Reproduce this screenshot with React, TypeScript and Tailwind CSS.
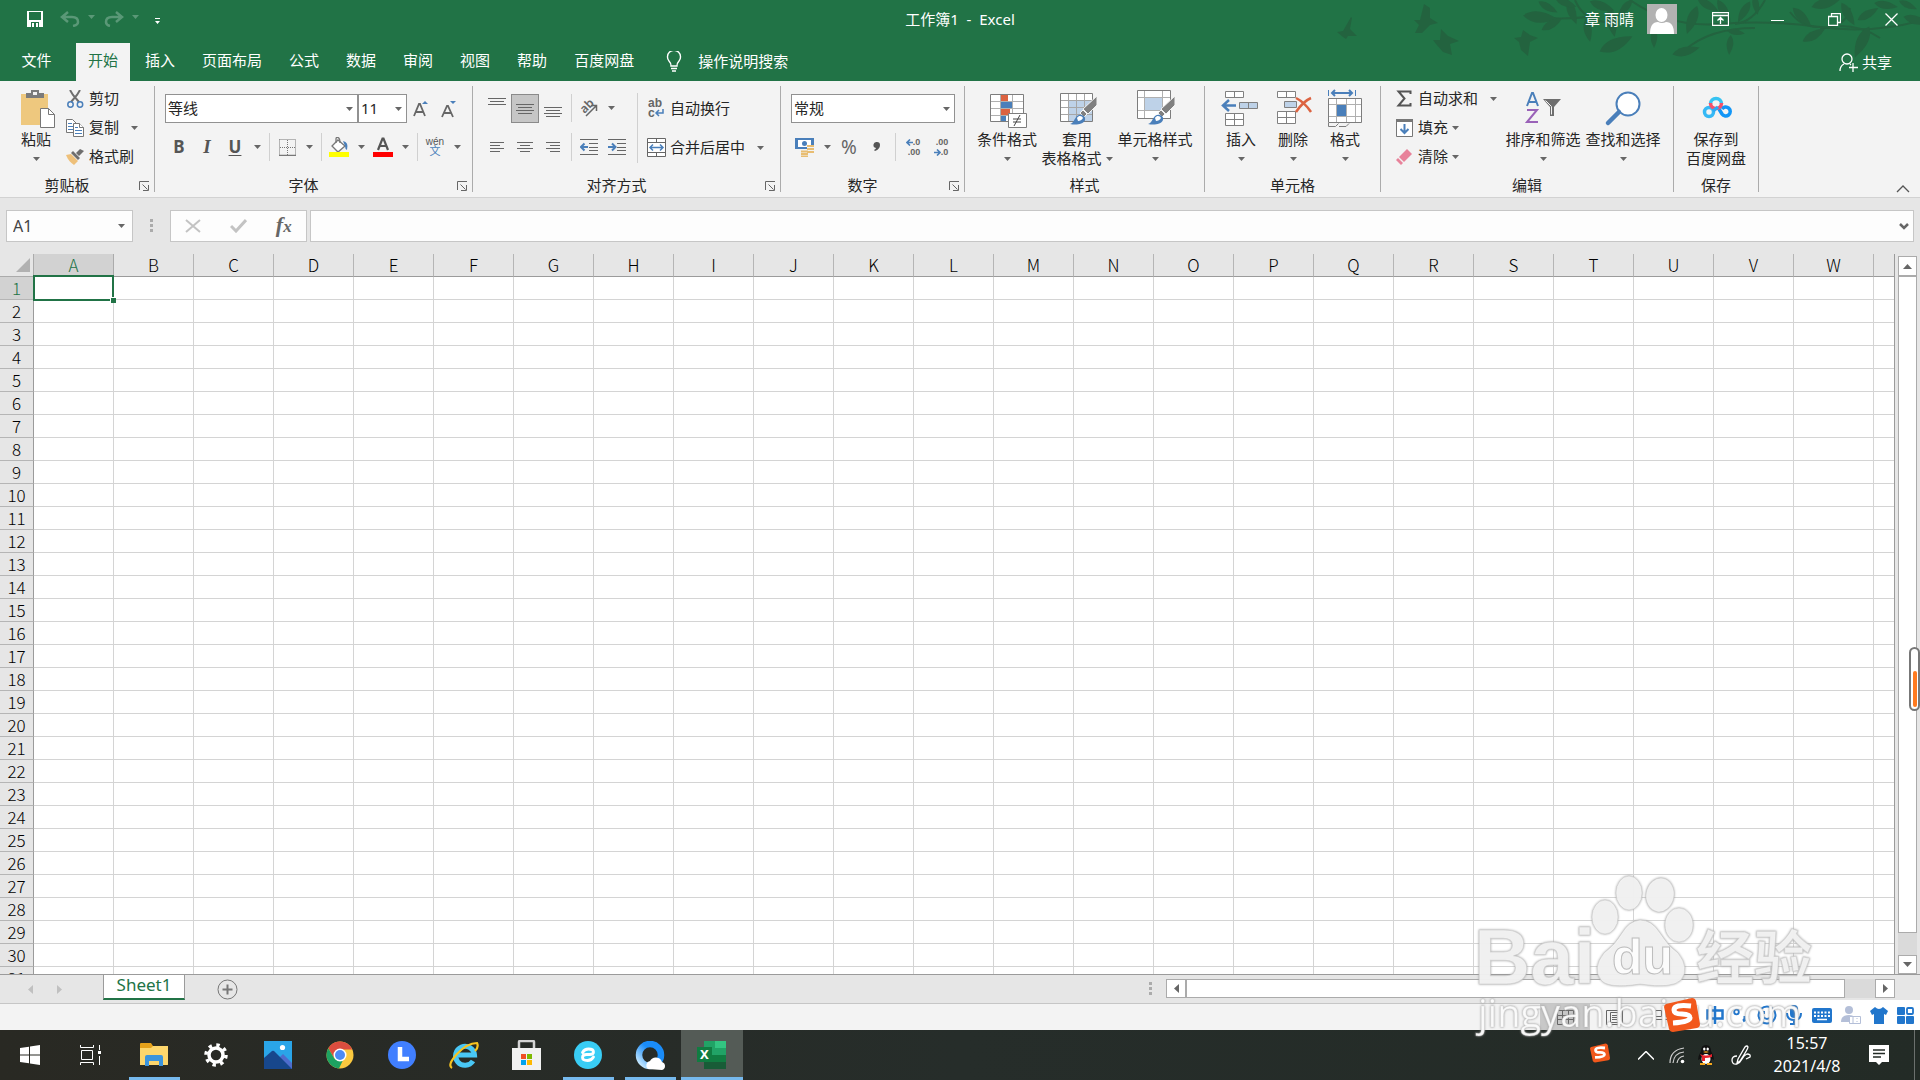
import type { ReactNode } from "react";

const tabs = ["插入", "页面布局", "公式", "数据", "审阅", "视图", "帮助", "百度网盘"];
const columns = "ABCDEFGHIJKLMNOPQRSTUVW".split("");
const rows = Array.from({ length: 31 }, (_, i) => i + 1);

const Arrow = ({ className = "text-[#666666]" }: { className?: string }) => (
  <svg width="7" height="4" viewBox="0 0 7 4" className={className}>
    <path d="M0 0h7L3.5 4z" fill="currentColor" />
  </svg>
);

const ArrowButton = ({ label }: { label: string }) => (
  <button aria-label={label} className="flex w-4 h-7 items-center justify-center">
    <Arrow />
  </button>
);

const Separator = () => (
  <span className="flex w-2 h-7 justify-center">
    <span className="w-px bg-[#d0d0d0]" />
  </span>
);

function Tool({
  label,
  active,
  children,
}: {
  label: string;
  active?: boolean;
  children: ReactNode;
}) {
  return (
    <button
      aria-label={label}
      className={
        active
          ? "flex w-7 h-[29px] items-center justify-center border border-[#8a8a8a] bg-[#c6c6c6]"
          : "flex w-7 h-7 items-center justify-center"
      }
    >
      {children}
    </button>
  );
}

function BigButton({
  icon,
  label,
  second,
  arrow = true,
  className,
}: {
  icon: ReactNode;
  label: string;
  second?: string;
  arrow?: boolean;
  className: string;
}) {
  return (
    <button className={`flex flex-col items-center pt-[7px] leading-[19px] whitespace-nowrap ${className}`}>
      <span className="h-[42px]">{icon}</span>
      <span>{label}</span>
      <span className="flex h-[19px] items-center gap-1">
        {second}
        {arrow && <Arrow />}
      </span>
    </button>
  );
}

function SmallButton({
  icon,
  label,
  arrow,
}: {
  icon: ReactNode;
  label: string;
  arrow?: "near" | "far";
}) {
  return (
    <button className="flex h-[29px] items-center gap-1 whitespace-nowrap">
      <span className="flex w-5 justify-center">{icon}</span>
      <span>{label}</span>
      {arrow && (
        <span className={arrow === "far" ? "pl-2" : ""}>
          <Arrow />
        </span>
      )}
    </button>
  );
}

function Group({
  title,
  launcher,
  className,
  children,
}: {
  title: string;
  launcher?: boolean;
  className: string;
  children: ReactNode;
}) {
  return (
    <section className={`flex shrink-0 ${className}`}>
      <div className="flex min-w-0 grow flex-col">
        <div className="flex h-[93px]">{children}</div>
        <div className="flex h-[23px] items-center">
          <span className="grow text-center">{title}</span>
          {launcher && (
            <button aria-label={`${title}设置`} className="flex w-5 justify-center">
              <svg width="11" height="10" viewBox="0 0 11 10" fill="none" stroke="#666666">
                <path d="M.5 9V.5H10M3.5 3.5l5 5M9.5 4v5.5H4" />
              </svg>
            </button>
          )}
        </div>
      </div>
      <span className="my-[5px] w-px bg-[#ababab]" />
    </section>
  );
}

function Combo({ label, value, className }: { label: string; value: string; className: string }) {
  return (
    <div className={`relative h-[29px] ${className}`}>
      <select
        aria-label={label}
        className="h-full w-full appearance-none border border-[#919191] bg-white pl-[2px] text-[#262626]"
      >
        <option>{value}</option>
      </select>
      <span className="pointer-events-none absolute inset-y-0 right-[5px] flex items-center">
        <Arrow />
      </span>
    </div>
  );
}

/* horizontal strokes used by all the alignment icons */
function Lines({ spans, y, gap = 4 }: { spans: [number, number][]; y: number; gap?: number }) {
  return (
    <svg width="20" height="28" viewBox="0 0 20 28" fill="none" stroke="#666666">
      {spans.map(([from, to], i) => (
        <path key={i} d={`M${from} ${y + i * gap + 0.5}H${to}`} />
      ))}
    </svg>
  );
}

function Indent({ flip }: { flip?: boolean }) {
  return (
    <svg width="18" height="16" viewBox="0 0 18 16" fill="none" stroke="#666666">
      <path d="M0 .5h18M9 4.5h9M9 8.5h9M9 11.5h9M0 15.5h18" />
      <path d={flip ? "M0 8h7M4 4.500l3.500 3.500L4 11.500" : "M8 8H1M4.500 4.500L1 8l3.500 3.500"} stroke="#4a7fba" strokeWidth="2" />
    </svg>
  );
}

const Brush = () => (
  <g>
    <path d="M41 8v9l-9 9-5-5z" fill="#808080" stroke="#f3f3f3" />
    <path d="M27 22l4 4-3 3-4-4z" fill="#808080" stroke="#f3f3f3" />
    <path d="M14 36c4-1 4-5 7-8 4-3 9 0 8 4-2 5-10 5-15 4z" fill="#4a7fba" />
    <path d="M21 30c2-3 5-2 6 0-1 2-3 3-5 3z" fill="#fff" />
  </g>
);

const PasteIcon = () => (
  <svg width="42" height="42" viewBox="0 0 42 42">
    <path d="M6 6h27v31H6z" fill="#eec87e" />
    <path d="M11 10V5h5V2h8v3h5v5z" fill="#7b7b7b" />
    <path d="M18 4h4v3h-4z" fill="#f3f3f3" />
    <path d="M25.500 20.500h8l6 6v13h-14z" fill="#fff" stroke="#777" />
    <path d="M33.500 20.500v6h6" fill="none" stroke="#777" />
  </svg>
);

const CutIcon = () => (
  <svg width="17" height="18" viewBox="0 0 17 18" fill="none">
    <path d="M3 0l3 5 6 7M13 0l-3 5-6 7" stroke="#6e6e6e" strokeWidth="2" />
    <circle cx="3.500" cy="14.500" r="2.700" stroke="#4a7fba" strokeWidth="1.500" />
    <circle cx="13" cy="14.500" r="2.700" stroke="#4a7fba" strokeWidth="1.500" />
  </svg>
);

const CopyIcon = () => (
  <svg width="18" height="18" viewBox="0 0 18 18" fill="#fff" stroke="#777">
    <path d="M.5.5h6l4 4v9H.5z" />
    <path d="M2 4.500h4M2 7.500h5M2 10.500h5" stroke="#4a7fba" />
    <path d="M7.500 4.500h6l4 4v9h-10z" />
    <path d="M13.500 4.500v4h4" />
    <path d="M9 8.500h3M9 11.500h7M9 14.500h7" stroke="#4a7fba" />
  </svg>
);

const PainterIcon = () => (
  <svg width="18" height="16" viewBox="0 0 18 16">
    <path d="M0 6l5-1 7 7-4 4c-3-2-6-5-8-10z" fill="#eec07a" />
    <path d="M5 4l2-2 7 7-2 2zM10 4l4-4 4 2-5 5z" fill="#6e6e6e" />
  </svg>
);

const CondIcon = () => (
  <svg width="42" height="42" viewBox="0 0 42 42">
    <path d="M4.500 6.500h33v27h-33z" fill="#fff" />
    <path d="M15 7h7v6h-7zM15 21h9v6h-9z" fill="#dc6341" />
    <path d="M15 14h11v6H15zM15 28h5v5h-5z" fill="#4a7fba" />
    <path d="M14.500 7v26M26.500 7v26M5 13.500h32M5 20.500h32M5 27.500h32" stroke="#b0b0b0" />
    <path d="M4.500 6.500h33v27h-33z" fill="none" stroke="#7d7d7d" />
    <path d="M22.500 25.500h18v14h-18z" fill="#fff" stroke="#7d7d7d" />
    <path d="M27 31h8M27 34h8M34 27l-6 11" stroke="#444" />
  </svg>
);

const TableIcon = () => (
  <svg width="42" height="42" viewBox="0 0 42 42">
    <path d="M4.500 5.500h32v28h-32z" fill="#fff" />
    <path d="M13 13h24v20H13z" fill="#bed2e8" />
    <path d="M12.500 5v28M20.500 5v28M28.500 5v28M5 12.500h31M5 19.500h31M5 26.500h31" stroke="#a6a6a6" />
    <path d="M4.500 5.500h32v28h-32z" fill="none" stroke="#7d7d7d" />
    <Brush />
  </svg>
);

const CellStyleIcon = () => (
  <svg width="42" height="42" viewBox="0 0 42 42">
    <path d="M3.500 2.500h33v28h-33z" fill="#fff" />
    <path d="M10.500 3v27M28.500 3v27M4 9.500h32M4 22.500h32" stroke="#b0b0b0" />
    <path d="M11 10h17v12H11z" fill="#bed2e8" />
    <path d="M3.500 2.500h33v28h-33z" fill="none" stroke="#7d7d7d" />
    <Brush />
  </svg>
);

const InsertIcon = () => (
  <svg width="42" height="42" viewBox="0 0 42 42" fill="#fff" stroke="#808080">
    <path d="M5.500 3.500h18v6h-18zM14.500 3.500v6M5.500 25.500h18v12h-18zM14.500 25.500v12M5.500 31.500h18" />
    <path d="M19.500 14.500h18v6h-18zM28.500 14.500v6" fill="#bed2e8" />
    <path d="M3 17.500h13M9 12l-6 5.500L9 23" fill="none" stroke="#4a7fba" strokeWidth="2.500" />
  </svg>
);

const DeleteIcon = () => (
  <svg width="42" height="42" viewBox="0 0 42 42" fill="#fff" stroke="#808080">
    <path d="M5.500 3.500h18v6h-18zM14.500 3.500v6M5.500 23.500h18v12h-18zM14.500 23.500v12M5.500 29.500h18" />
    <path d="M12.500 13.500h12v6h-12z" fill="#bed2e8" />
    <path d="M24 10c6 3 11 8 15 14M39 10c-7 3-11 8-15 14" fill="none" stroke="#dc6341" strokeWidth="2.500" />
  </svg>
);

const FormatIcon = () => (
  <svg width="42" height="42" viewBox="0 0 42 42" fill="none">
    <path d="M4.500 10.500h33v24h-33z" fill="#fff" />
    <path d="M12.500 11v23M22.500 11v23M31.500 11v23M5 16.500h32M5 28.500h32" stroke="#b0b0b0" />
    <path d="M4.500 10.500h33v24h-33zM4.500 35v3.500h7l3-3M15 38.500h7l3-3" stroke="#7d7d7d" />
    <path d="M13 17h9v11h-9z" fill="#4a7fba" />
    <path d="M4.500 2v6M31.500 2v6" stroke="#4a7fba" />
    <path d="M8 5h20M11 2L8 5l3 3M25 2l3 3-3 3" stroke="#4a7fba" strokeWidth="2" />
  </svg>
);

const SortIcon = () => (
  <svg width="42" height="42" viewBox="0 0 42 42" fill="none">
    <path d="M5 18l5-13h1l5 13M7 14h7" stroke="#4a7fba" strokeWidth="2" />
    <path d="M5 22h10L5 34h11" stroke="#9a62b8" strokeWidth="2" />
    <path d="M21 11h18l-7 8v9h-4v-9z" fill="#6e6e6e" />
    <path d="M23.500 12.500l6 6v8" stroke="#f3f3f3" />
  </svg>
);

const FindIcon = () => (
  <svg width="42" height="42" viewBox="0 0 42 42" fill="none" stroke="#4a7fba">
    <circle cx="26" cy="16" r="11.500" fill="#fff" strokeWidth="2" />
    <path d="M17 24L6 35" strokeWidth="4.500" strokeLinecap="round" />
  </svg>
);

const CloudIcon = () => (
  <svg width="42" height="42" viewBox="0 0 42 42" fill="none" strokeWidth="3.500">
    <path d="M15.500 16a5.500 5.500 0 0 1 11 0" stroke="#36c3f2" />
    <circle cx="14" cy="24" r="4.500" stroke="#36b9f5" />
    <path d="M24 21l3 5a4.500 4.500 0 1 0 0-5" stroke="#1296f7" />
    <path d="M15.500 15a5.500 5.500 0 0 0 11 0" stroke="#f4516c" />
    <path d="M18 23l5-4" stroke="#2ba9f5" />
  </svg>
);

const SumIcon = () => (
  <svg width="16" height="17" viewBox="0 0 16 17" fill="none">
    <path d="M14.500 4V1.500h-12l6 7-6 7h12V13" stroke="#555" strokeWidth="2" />
  </svg>
);

const FillIcon = () => (
  <svg width="17" height="18" viewBox="0 0 17 18" fill="none">
    <path d="M.5.5h16v17H.5z" fill="#fff" stroke="#777" />
    <path d="M0 0h17v3H0z" fill="#777" />
    <path d="M8.500 5v9M4.500 10l4 4 4-4" stroke="#4a7fba" strokeWidth="2" />
  </svg>
);

const EraserIcon = () => (
  <svg width="16" height="16" viewBox="0 0 16 16">
    <path d="M11 0l5 5-8 8-5-5z" fill="#e8829a" />
    <path d="M2 9l5 5-2 2-5-5z" fill="#e8829a" />
  </svg>
);

const leaves: [number, number, number, number][] = [
  [220, 17, 34, 5], [232, 24, 24, -30], [228, 7, 22, 30], [252, 12, 26, 70], [268, 30, 24, 80],
  [246, 3, 22, 20], [292, 22, 30, 80], [282, 6, 26, 20], [305, 8, 22, 130], [296, 44, 36, -25],
  [334, 38, 20, 90], [366, 51, 28, -14], [410, 45, 20, 95], [372, 20, 30, 110], [388, 5, 24, 30],
  [404, 11, 26, 60], [424, 12, 24, 120], [416, 32, 18, 10], [436, 5, 20, 80], [482, 17, 26, 45],
  [494, 35, 26, -30], [506, 3, 30, -15], [528, 14, 26, 60], [548, 14, 24, -30], [542, 42, 34, 115],
  [566, 5, 24, 10], [588, 5, 20, 25], [596, 20, 26, 15],
];

/* foliage and birds behind the title bar */
const HeaderArt = () => (
  <svg className="absolute top-0 right-0" width="600" height="66" viewBox="0 0 600 66" fill="#23633f">
    <path d="M17 32l6-1 8-14 1 1-2 11 7 7h-9l-2 3-3-2zM94 20h6l4-16 6 4v10l8 5-8 2-8 8h-7l4-8zM113 40h7l1-11 7 7 11 5-9 3 2 11-9-3-7-8zM194 38l7-1 2-7 7 5 8 3-8 4-2 14-7-6-2-8z" />
    <g fill="none" stroke="#23633f" strokeWidth="2">
      <path d="M215 17q25 3 52 0M255 0q10 24 40 22M310 0q40 28 90 24t100 3 100-6" />
      <path d="M365 50q25-22 70-22M470 12q12 16 30 15M530 8q-4 20-30 20M520 26q22 0 40 12M445 0q-12 22-30 24" />
    </g>
    {leaves.map(([x, y, size, angle], i) => (
      <path
        key={i}
        d="M-.5 0Q-.15-.32.5 0Q-.1.34-.5 0z"
        transform={`translate(${x} ${y}) rotate(${angle}) scale(${size})`}
      />
    ))}
  </svg>
);

function Header() {
  return (
    <header className="relative bg-[#217346] text-white">
      <HeaderArt />
      <div className="relative grid h-[38px] grid-cols-[1fr_auto_1fr] items-center">
        <div className="flex items-center pl-[27px]">
          <button aria-label="保存" className="w-[33px]">
            <svg width="16" height="16" viewBox="0 0 16 16">
              <path d="M0 0h16v16H0z" fill="#fff" />
              <path d="M2 1h12v8H2zM4 11h8v5H4z" fill="#217346" />
              <path d="M5 12h2v4H5zM9 12h2v4H9z" fill="#fff" />
            </svg>
          </button>
          {["撤消", "恢复"].map((name, i) => (
            <div key={name} className="flex w-11 items-center gap-2 text-[#5a9877]">
              <button aria-label={name}>
                <svg width="20" height="16" viewBox="0 0 20 16" fill="none" stroke="currentColor" strokeWidth="2.500">
                  <path
                    d={
                      i
                        ? "M18 6H8q-6 0-6 5 0 3 4 4M12 1l6 5-6 5"
                        : "M2 6h10q6 0 6 5 0 3-5 4M8 1L2 6l6 5"
                    }
                  />
                </svg>
              </button>
              <Arrow className="mb-1" />
            </div>
          ))}
          <button aria-label="自定义快速访问工具栏" className="pl-[6px] pt-1">
            <svg width="7" height="7" viewBox="0 0 7 7" fill="#fff">
              <path d="M1 0h5v1H1zM1 3h5L3.500 6z" />
            </svg>
          </button>
        </div>
        <h1 className="whitespace-pre">{"工作簿1  -  Excel"}</h1>
        <div className="flex items-center justify-end">
          <span className="pr-[13px]">章 雨晴</span>
          <svg width="30" height="30" viewBox="0 0 30 30">
            <path d="M0 0h30v30H0z" fill="#b2b2b2" />
            <path d="M3 30q0-12 8-12 4 2 8 0 8 0 8 12z" fill="#fff" />
            <ellipse cx="14.500" cy="11" rx="6" ry="7" fill="#fff" />
          </svg>
          <div className="flex pl-[15px]">
            <button aria-label="功能区显示选项" className="flex w-[57px] justify-center">
              <svg width="17" height="14" viewBox="0 0 17 14" fill="none" stroke="#fff">
                <path d="M.5.5h16v13H.5zM.5 3.500h16M8.500 12V6M5.500 8.500l3-3 3 3" strokeWidth="1.300" />
              </svg>
            </button>
            <button aria-label="最小化" className="flex w-[57px] items-center justify-center">
              <svg width="13" height="13" viewBox="0 0 13 13" stroke="#fff">
                <path d="M0 7.500h13" />
              </svg>
            </button>
            <button aria-label="还原" className="flex w-[57px] items-center justify-center">
              <svg width="13" height="13" viewBox="0 0 13 13" fill="none" stroke="#fff" strokeWidth="1.300">
                <path d="M.5 3.500h9v9h-9zM3.500 3V.5h9v9H10" />
              </svg>
            </button>
            <button aria-label="关闭" className="flex w-[57px] items-center justify-center">
              <svg width="13" height="13" viewBox="0 0 13 13" stroke="#fff" strokeWidth="1.300">
                <path d="M.5.5l12 12M12.500.5l-12 12" />
              </svg>
            </button>
          </div>
        </div>
      </div>
      <nav className="relative flex h-[43px] gap-[3px] pt-[5px]">
        <button className="w-[73px] pb-1">文件</button>
        <button className="bg-[#f3f3f3] px-3 pb-1 text-[#217346]">开始</button>
        {tabs.map((tab) => (
          <button key={tab} className="px-3 pb-1">
            {tab}
          </button>
        ))}
        <button className="flex items-center gap-4 pb-[2px] pl-[17px]">
          <svg width="16" height="21" viewBox="0 0 16 21" fill="none" stroke="#fff" strokeWidth="1.400">
            <path d="M5 15q0-3-2-5a6.500 6.500 0 1 1 10 0q-2 2-2 5zM5 17.500h6M6 20h4" />
          </svg>
          操作说明搜索
        </button>
        <button className="ml-auto flex items-center gap-1 pr-7">
          <svg width="19" height="19" viewBox="0 0 19 19" fill="none" stroke="#fff" strokeWidth="1.300">
            <circle cx="8" cy="6" r="5" />
            <path d="M1 18q0-5 4-7M11 11l1 1M14 10v9M10 14.500h9" />
          </svg>
          共享
        </button>
      </nav>
    </header>
  );
}

function Ribbon() {
  return (
    <div className="flex border-b border-[#d2d2d2] bg-[#f3f3f3] text-[#262626]">
      <Group title="剪贴板" launcher className="w-[155px]">
        <div className="flex gap-1 pl-[11px]">
          <BigButton icon={<PasteIcon />} label="粘贴" className="w-[50px]" />
          <div className="flex flex-col pt-[3px]">
            <SmallButton icon={<CutIcon />} label="剪切" />
            <SmallButton icon={<CopyIcon />} label="复制" arrow="far" />
            <SmallButton icon={<PainterIcon />} label="格式刷" />
          </div>
        </div>
      </Group>

      <Group title="字体" launcher className="w-[318px]">
        <div className="flex flex-col gap-[10px] pt-[13px] pl-[10px]">
          <div className="flex items-center">
            <Combo label="字体" value="等线" className="w-[193px]" />
            <Combo label="字号" value="11" className="w-[49px]" />
            <Tool label="增大字号">
              <svg width="16" height="18" viewBox="0 0 16 18" fill="none">
                <path d="M1 16L6 4h1l5 12M3 12h7" stroke="#666" strokeWidth="1.800" />
                <path d="M9 4h6l-3-3z" fill="#4a7fba" />
              </svg>
            </Tool>
            <Tool label="减小字号">
              <svg width="16" height="18" viewBox="0 0 16 18" fill="none">
                <path d="M1 17L6 6h1l5 11M3 13h7" stroke="#666" strokeWidth="1.800" />
                <path d="M9 1h6l-3 3z" fill="#4a7fba" />
              </svg>
            </Tool>
          </div>
          <div className="flex items-center text-[17px] text-[#555555]">
            <Tool label="加粗"><b>B</b></Tool>
            <Tool label="倾斜"><b className="font-['Liberation_Serif',serif] text-[19px] italic">I</b></Tool>
            <Tool label="下划线"><b className="underline underline-offset-2">U</b></Tool>
            <ArrowButton label="下划线样式" />
            <Separator />
            <Tool label="边框">
              <svg width="17" height="17" viewBox="0 0 17 17" fill="none" stroke="#777">
                <path d="M.5.5h16v16M.5.5v16M8.500 1v15M1 8.500h15" strokeDasharray="1 1" />
                <path d="M0 16.500h17" strokeWidth="1.500" />
              </svg>
            </Tool>
            <ArrowButton label="边框样式" />
            <Separator />
            <Tool label="填充颜色">
              <svg width="20" height="20" viewBox="0 0 20 20" fill="none">
                <path d="M9 3l7 6-7 6-6-6z" fill="#fff" stroke="#777" strokeWidth="1.300" />
                <path d="M7 6V2q0-2 2-1.500T11 6" stroke="#777" strokeWidth="1.300" />
                <path d="M14 4q6 1 4 9-2-1-2-4z" fill="#4a7fba" />
                <path d="M0 15h20v5H0z" fill="#ffff00" />
              </svg>
            </Tool>
            <ArrowButton label="更多填充颜色" />
            <Tool label="字体颜色">
              <svg width="20" height="20" viewBox="0 0 20 20" fill="none">
                <path d="M5 13L9.500 1.500h1L15 13M7 9h6" stroke="#555" strokeWidth="2.200" />
                <path d="M0 15h20v5H0z" fill="#ff0000" />
              </svg>
            </Tool>
            <ArrowButton label="更多字体颜色" />
            <Separator />
            <Tool label="拼音">
              <span className="flex flex-col items-center font-['Liberation_Sans','Noto_Sans_CJK_SC',sans-serif] text-[10px] leading-[9px]">
                wén
                <span className="text-[11px] leading-[11px] text-[#4a7fba]">文</span>
              </span>
            </Tool>
            <ArrowButton label="拼音设置" />
          </div>
        </div>
      </Group>

      <Group title="对齐方式" launcher className="w-[308px]">
        <div className="flex pl-[10px]">
          <div className="flex flex-col gap-[10px] pt-[13px]">
            <div className="flex h-[29px]">
              <Tool label="顶端对齐"><Lines spans={[[1, 19], [3, 17], [1, 19]]} y={4} gap={3} /></Tool>
              <Tool label="垂直居中" active><Lines spans={[[1, 19], [3, 17], [1, 19], [3, 17]]} y={9} gap={3} /></Tool>
              <Tool label="底端对齐"><Lines spans={[[1, 19], [3, 17], [1, 19], [3, 17]]} y={13} gap={3} /></Tool>
              <Separator />
              <Tool label="方向">
                <svg className="overflow-visible" width="20" height="20" viewBox="0 0 20 20">
                  <text x="1" y="13" transform="rotate(-45 7 9)" fontSize="12" fontWeight="600" fill="#666">ab</text>
                  <path d="M7 18L17 8M12 7.500h5.500V13" fill="none" stroke="#666" strokeWidth="1.500" />
                </svg>
              </Tool>
              <ArrowButton label="更多方向" />
            </div>
            <div className="flex">
              <Tool label="左对齐"><Lines spans={[[3, 17], [3, 13], [3, 17], [3, 13]]} y={9} gap={3} /></Tool>
              <Tool label="居中"><Lines spans={[[2, 18], [5, 15], [2, 18], [5, 15]]} y={9} gap={3} /></Tool>
              <Tool label="右对齐"><Lines spans={[[3, 17], [7, 17], [3, 17], [7, 17]]} y={9} gap={3} /></Tool>
              <Separator />
              <Tool label="减少缩进"><Indent /></Tool>
              <Tool label="增加缩进"><Indent flip /></Tool>
            </div>
          </div>
          <span className="mt-3 ml-[6px] mr-[8px] h-[70px] w-px bg-[#d0d0d0]" />
          <div className="flex flex-col gap-[10px] pt-[13px]">
            <SmallButton
              label="自动换行"
              icon={
                <svg className="overflow-visible font-['Liberation_Sans',sans-serif]" width="16" height="20" viewBox="0 0 16 20">
                  <text x="0" y="8" fontSize="12" fontWeight="700" fill="#666">ab</text>
                  <text x="0" y="18" fontSize="12" fontWeight="700" fill="#666">c</text>
                  <path d="M15 10v4H9M11 11l-3 3 3 3" fill="none" stroke="#4a7fba" strokeWidth="1.500" />
                </svg>
              }
            />
            <SmallButton
              label="合并后居中"
              arrow="far"
              icon={
                <svg width="19" height="19" viewBox="0 0 19 19" fill="#fff" stroke="#666">
                  <path d="M.5.5h18v18H.5zM.5 4.500h18M.5 14.500h18M9.500.5v4M9.500 14.500v4" />
                  <path d="M3 9.500h13M6 6.500l-3 3 3 3M13 6.500l3 3-3 3" fill="none" stroke="#4a7fba" strokeWidth="1.500" />
                </svg>
              }
            />
          </div>
        </div>
      </Group>

      <Group title="数字" launcher className="w-[184px]">
        <div className="flex flex-col gap-[10px] pt-[13px] pl-[10px]">
          <Combo label="数字格式" value="常规" className="w-[164px]" />
          <div className="flex items-center text-[#666666]">
            <Tool label="会计数字格式">
              <svg width="20" height="20" viewBox="0 0 20 20">
                <path d="M0 1h19v11H0z" fill="#4a7fba" />
                <path d="M3 3h13v7H3z" fill="#fff" />
                <circle cx="9.500" cy="6.500" r="2.500" fill="#4a7fba" />
                <path d="M12 8h7v9h-7zM6 14h7v6H6z" fill="#f3f3f3" />
                <path d="M12 9h7M12 12h7M12 15h7M6 14.500h7M6 17h7M6 19.500h7" stroke="#e8bd72" strokeWidth="1.800" />
              </svg>
            </Tool>
            <ArrowButton label="更多会计格式" />
            <Tool label="百分比样式"><span className="text-[19px]">%</span></Tool>
            <Tool label="千位分隔样式">
              <svg width="8" height="12" viewBox="0 0 8 12">
                <path d="M4 1a3 3 0 0 1 3 3q0 4-5 6l-1-1q2-1 2-2a3 3 0 0 1 1-6z" fill="#555" />
              </svg>
            </Tool>
            <Separator />
            <Tool label="增加小数位数">
              <span className="flex flex-col items-end font-['Liberation_Sans',sans-serif] text-[9px] leading-[10px] font-bold">
                <span className="flex items-center">
                  <svg width="7" height="7" viewBox="0 0 7 7" fill="none" stroke="#4a7fba" strokeWidth="1.600">
                    <path d="M7 3.500H1M4 .5l-3 3 3 3" />
                  </svg>
                  .0
                </span>
                <span>.00</span>
              </span>
            </Tool>
            <Tool label="减少小数位数">
              <span className="flex flex-col items-end font-['Liberation_Sans',sans-serif] text-[9px] leading-[10px] font-bold">
                <span>.00</span>
                <span className="flex items-center">
                  <svg width="7" height="7" viewBox="0 0 7 7" fill="none" stroke="#4a7fba" strokeWidth="1.600">
                    <path d="M0 3.500h6M3 .5l3 3-3 3" />
                  </svg>
                  .0
                </span>
              </span>
            </Tool>
          </div>
        </div>
      </Group>

      <Group title="样式" className="w-[240px]">
        <div className="flex pl-[10px]">
          <BigButton icon={<CondIcon />} label="条件格式" className="w-16" />
          <BigButton icon={<TableIcon />} label="套用" second="表格格式" className="w-[76px]" />
          <BigButton icon={<CellStyleIcon />} label="单元格样式" className="w-20" />
        </div>
      </Group>

      <Group title="单元格" className="w-[176px]">
        <div className="flex pl-[10px]">
          <BigButton icon={<InsertIcon />} label="插入" className="w-[52px]" />
          <BigButton icon={<DeleteIcon />} label="删除" className="w-[52px]" />
          <BigButton icon={<FormatIcon />} label="格式" className="w-[52px]" />
        </div>
      </Group>

      <Group title="编辑" className="w-[293px]">
        <div className="flex pl-[13px]">
          <div className="flex w-[109px] flex-col pt-[3px]">
            <SmallButton icon={<SumIcon />} label="自动求和" arrow="far" />
            <SmallButton icon={<FillIcon />} label="填充" arrow="near" />
            <SmallButton icon={<EraserIcon />} label="清除" arrow="near" />
          </div>
          <BigButton icon={<SortIcon />} label="排序和筛选" className="w-20" />
          <BigButton icon={<FindIcon />} label="查找和选择" className="w-20" />
        </div>
      </Group>

      <Group title="保存" className="w-[85px]">
        <BigButton icon={<CloudIcon />} label="保存到" second="百度网盘" arrow={false} className="w-full" />
      </Group>

      <button aria-label="折叠功能区" className="ml-auto self-end pr-[10px] pb-1">
        <svg width="14" height="8" viewBox="0 0 14 8" fill="none" stroke="#555" strokeWidth="1.300">
          <path d="M1 7l6-6 6 6" />
        </svg>
      </button>
    </div>
  );
}

function FormulaBar() {
  return (
    <div className="flex h-14 bg-[#e6e6e6] px-[6px] py-3">
      <div className="relative w-[127px]">
        <input
          aria-label="名称框"
          defaultValue="A1"
          className="h-8 w-full border border-[#c6c6c6] bg-[#fdfdfd] pl-[6px] text-[16px] text-[#444444]"
        />
        <span className="pointer-events-none absolute inset-y-0 right-2 flex items-center">
          <Arrow />
        </span>
      </div>
      <svg className="mx-[17px] h-8 w-[3px]" viewBox="0 0 3 32" fill="#ababab">
        <path d="M0 9h3v3H0zM0 14h3v3H0zM0 19h3v3H0z" />
      </svg>
      <div className="flex h-8 w-[137px] items-center justify-around border border-[#c6c6c6] bg-[#fdfdfd]">
        <button aria-label="取消">
          <svg width="16" height="14" viewBox="0 0 16 14" stroke="#c3c3c3" strokeWidth="2">
            <path d="M1 1l14 12M15 1L1 13" />
          </svg>
        </button>
        <button aria-label="输入">
          <svg width="17" height="14" viewBox="0 0 17 14" fill="none" stroke="#c3c3c3" strokeWidth="3">
            <path d="M1 7l5 5L16 1" />
          </svg>
        </button>
        <button aria-label="插入函数" className="font-['Liberation_Serif',serif] text-[22px] leading-5 font-bold text-[#666666] italic">
          f<span className="text-[17px]">x</span>
        </button>
      </div>
      <div className="relative ml-[3px] grow">
        <input aria-label="编辑栏" className="h-8 w-full border border-[#c6c6c6] bg-[#fdfdfd] px-2" />
        <button aria-label="展开编辑栏" className="absolute inset-y-0 right-[5px] flex items-center">
          <svg width="10" height="7" viewBox="0 0 10 7" fill="none" stroke="#666" strokeWidth="2.500">
            <path d="M1 1l4 4 4-4" />
          </svg>
        </button>
      </div>
    </div>
  );
}

function Sheet() {
  return (
    <div className="flex min-h-0 grow bg-[#e6e6e6]">
      <div className="min-w-0 grow overflow-hidden border-r border-[#9b9b9b] bg-white">
        <table className="w-full table-fixed border-separate border-spacing-0 font-['Noto_Sans_CJK_SC',sans-serif] text-[17px] leading-[22px] font-light">
          <thead>
            <tr className="h-[23px] bg-[#e6e6e6]">
              <th className="w-[34px] border-r border-b border-[#ababab] p-0">
                <svg className="ml-4" width="14" height="14" viewBox="0 0 14 14" fill="#b1b1b1">
                  <path d="M14 0v14H0z" />
                </svg>
              </th>
              {columns.map((name) => (
                <th
                  key={name}
                  className={
                    name === "A"
                      ? "w-20 border-r border-b border-r-[#ababab] border-b-[#217346] bg-[#d2d2d2] p-0 font-light text-[#217346]"
                      : "w-20 border-r border-b border-r-[#b5b5b5] border-b-[#9b9b9b] p-0 font-light"
                  }
                >
                  {name}
                </th>
              ))}
              <th className="border-b border-[#9b9b9b] p-0" />
            </tr>
          </thead>
          <tbody>
            {rows.map((row) => (
              <tr key={row} className="h-[23px]">
                <th
                  className={
                    row === 1
                      ? "border-r border-b border-r-[#217346] border-b-[#b5b5b5] bg-[#d2d2d2] p-0 font-light text-[#217346]"
                      : "border-r border-b border-r-[#9b9b9b] border-b-[#b5b5b5] bg-[#e6e6e6] p-0 font-light"
                  }
                >
                  {row}
                </th>
                {columns.map((name) => (
                  <td key={name} className="border-r border-b border-[#d4d4d4] p-0">
                    {row === 1 && name === "A" && (
                      <div className="relative h-[22px]">
                        <span className="absolute -inset-x-[1px] -inset-y-[2px] border-2 border-[#217346]" />
                        <span className="absolute -right-[3px] -bottom-[4px] h-[6px] w-[6px] border-t border-l border-white bg-[#217346]" />
                      </div>
                    )}
                  </td>
                ))}
                <td className="border-b border-[#d4d4d4] p-0" />
              </tr>
            ))}
          </tbody>
        </table>
      </div>
      <div className="flex w-[25px] shrink-0 flex-col pt-[2px] pl-[3px] pr-[3px]">
        <button aria-label="向上滚动" className="flex h-5 items-center justify-center border border-[#ababab] bg-white">
          <svg width="9" height="5" viewBox="0 0 9 5" fill="#666">
            <path d="M0 5h9L4.500 0z" />
          </svg>
        </button>
        <div className="flex grow flex-col bg-[#dadada] pb-[22px]">
          <div className="grow border border-[#ababab] bg-white" />
        </div>
        <button aria-label="向下滚动" className="flex h-[19px] items-center justify-center border border-[#ababab] bg-white">
          <svg width="9" height="5" viewBox="0 0 9 5" fill="#666">
            <path d="M0 0h9L4.500 5z" />
          </svg>
        </button>
      </div>
    </div>
  );
}

function SheetTabs() {
  return (
    <div className="flex h-[30px] shrink-0 items-start border-t border-b border-t-[#9b9b9b] border-b-[#c6c6c6] bg-[#e6e6e6]">
      <div className="flex h-7 w-[103px] items-center gap-6 pl-7 text-[#c0c0c0]">
        <button aria-label="上一个工作表">
          <svg width="5" height="9" viewBox="0 0 5 9" fill="currentColor"><path d="M5 0v9L0 4.500z" /></svg>
        </button>
        <button aria-label="下一个工作表">
          <svg width="5" height="9" viewBox="0 0 5 9" fill="currentColor"><path d="M0 0v9l5-4.500z" /></svg>
        </button>
      </div>
      <button className="h-[25px] w-[82px] border-x border-b-2 border-x-[#9b9b9b] border-b-[#217346] bg-white pb-1 text-[17px] leading-[19px] text-[#217346]">
        Sheet1
      </button>
      <button aria-label="新工作表" className="ml-8 pt-1">
        <svg width="21" height="21" viewBox="0 0 21 21" fill="none" stroke="#777">
          <circle cx="10.500" cy="10.500" r="9.500" />
          <path d="M10.500 5.500v10M5.500 10.500h10" strokeWidth="2" />
        </svg>
      </button>
      <div className="ml-auto flex w-[771px] items-center pt-1 pr-[25px]">
        <svg className="mr-[14px]" width="3" height="13" viewBox="0 0 3 13" fill="#ababab">
          <path d="M0 0h3v3H0zM0 5h3v3H0zM0 10h3v3H0z" />
        </svg>
        <button aria-label="向左滚动" className="flex h-[19px] w-5 items-center justify-center border border-[#ababab] bg-white">
          <svg width="5" height="9" viewBox="0 0 5 9" fill="#666"><path d="M5 0v9L0 4.500z" /></svg>
        </button>
        <div className="flex h-[19px] grow bg-[#dadada] pr-[30px]">
          <div className="grow border border-[#ababab] bg-white" />
        </div>
        <button aria-label="向右滚动" className="flex h-[19px] w-5 items-center justify-center border border-[#ababab] bg-white">
          <svg width="5" height="9" viewBox="0 0 5 9" fill="#666"><path d="M0 0v9l5-4.500z" /></svg>
        </button>
      </div>
    </div>
  );
}

const SogouLogo = ({ size }: { size: number }) => (
  <svg width={size} height={size} viewBox="0 0 36 36">
    <path d="M2 7L28 1q3 0 4 3l4 23q0 3-3 4L9 35q-3 0-4-3L0 10q0-2 2-3z" fill="#f2581c" />
    <path d="M27 9q-17-2-17 4 0 4 8 4t8 4-17 5" fill="none" stroke="#fff" strokeWidth="5" />
  </svg>
);

function ImeBar() {
  return (
    <div className="absolute right-0 bottom-0 flex h-[30px] w-[256px] items-center">
      <span className="z-10 -mr-[9px]">
        <SogouLogo size={36} />
      </span>
      <div className="flex h-[30px] grow items-center justify-between bg-white pr-[6px] pl-[15px] text-[#2176cc]">
        <svg width="18" height="18" viewBox="0 0 18 18" fill="none" stroke="currentColor" strokeWidth="2.500">
          <path d="M1.500 4.500h15v8h-15zM9 0v18" />
        </svg>
        <svg width="15" height="15" viewBox="0 0 15 15" fill="none" stroke="currentColor" strokeWidth="1.800">
          <circle cx="3.500" cy="4" r="2.300" />
          <path d="M12 8v2q0 2-2 3" strokeWidth="3" />
        </svg>
        <svg width="20" height="20" viewBox="0 0 20 20" fill="none" stroke="currentColor" strokeWidth="2">
          <circle cx="10" cy="10" r="8.500" />
          <path d="M7 6v3M13 6v3M5.500 11q4.500 6 9 0" />
        </svg>
        <svg width="16" height="20" viewBox="0 0 16 20" fill="none" stroke="currentColor" strokeWidth="2">
          <rect x="5" y="1" width="6" height="11" rx="3" fill="currentColor" />
          <path d="M1 8q0 7 7 7t7-7M8 15v4M4 19h8" />
        </svg>
        <svg width="20" height="15" viewBox="0 0 20 15">
          <rect width="20" height="15" rx="2" fill="currentColor" />
          <path d="M2 4.500h16M2 8h16" stroke="#fff" strokeWidth="2" strokeDasharray="2 1.500" />
          <path d="M5 11.500h10" stroke="#fff" strokeWidth="1.500" />
        </svg>
        <svg width="20" height="18" viewBox="0 0 20 18" fill="#b4bfd8">
          <circle cx="8" cy="4" r="4" />
          <path d="M0 16q0-7 8-7 4 0 5 2H8v5z" />
          <path d="M8.500 10.500h11v7h-11zM12 11v6M16 12v1M16 15v1" fill="#fff" stroke="#b4bfd8" />
        </svg>
        <svg width="18" height="17" viewBox="0 0 18 17" fill="currentColor">
          <path d="M5 0q4 4 8 0l5 4-2 4-2-1v10H4V7L2 8 0 4z" />
        </svg>
        <svg width="17" height="17" viewBox="0 0 17 17" fill="currentColor">
          <rect width="8" height="8" rx="1" />
          <rect y="9" width="8" height="8" rx="1" />
          <rect x="9" y="9" width="8" height="8" rx="1" />
          <rect x="10" y="1" width="6" height="6" rx="1" fill="#fff" stroke="currentColor" strokeWidth="1.800" />
        </svg>
      </div>
    </div>
  );
}

function StatusBar() {
  return (
    <div className="relative flex h-[26px] shrink-0 justify-end bg-[#f3f3f3] pr-[232px]">
      <button aria-label="普通" className="flex w-[50px] items-center justify-center bg-[#c8c8c8]">
        <svg width="17" height="15" viewBox="0 0 17 15" fill="none" stroke="#666">
          <path d="M.5.5h16v14H.5zM.5 5.500h16M.5 9.500h16M5.500.5v14M11.500.5v14" />
        </svg>
      </button>
      <button aria-label="页面布局" className="flex w-[49px] items-center justify-center">
        <svg width="17" height="15" viewBox="0 0 17 15" fill="none" stroke="#666">
          <path d="M.5.5h16v14H.5zM4.500 2.500h8v10h-8zM6 5.500h5M6 7.500h5M6 9.500h5" />
        </svg>
      </button>
      <button aria-label="分页预览" className="flex w-[49px] items-center justify-center">
        <svg width="17" height="15" viewBox="0 0 17 15" fill="none" stroke="#666">
          <path d="M.5.5h6v6h-6zM10.500.5h6v6h-6zM.5 14.500v-5h16v5" />
        </svg>
      </button>
      <ImeBar />
    </div>
  );
}

const Windows = () => (
  <svg width="20" height="20" viewBox="0 0 20 20" fill="#fff">
    <path d="M0 3l9-1.200V9.500H0zM10 1.600L20 0v9.500H10zM0 10.500h9v7.800L0 17zM10 10.500h10V20l-10-1.600z" />
  </svg>
);

const TaskView = () => (
  <svg width="21" height="20" viewBox="0 0 21 20" fill="none" stroke="#fff">
    <path d="M1.500 5.500h11v9h-11zM.5 0v2.500h13V0M.5 20v-2.500h13V20M19.500 0v5M19.500 11v9" />
    <path d="M18 6h3v3h-3z" fill="#fff" stroke="none" />
  </svg>
);

const apps: { name: string; open?: boolean; active?: boolean; icon: ReactNode }[] = [
  {
    name: "文件资源管理器",
    open: true,
    icon: (
      <svg width="28" height="24" viewBox="0 0 28 24">
        <path d="M0 1q0-1 1-1h10l2 3h14q1 0 1 1v18H0z" fill="#e5a11a" />
        <path d="M0 5h11l2-2h15v18q0 1-1 1H0z" fill="#fdd66c" />
        <path d="M5 23V14q0-2 2-2h14q2 0 2 2v9h-4v-5H9v5z" fill="#3c94dc" />
      </svg>
    ),
  },
  {
    name: "设置",
    icon: (
      <svg width="24" height="24" viewBox="0 0 24 24" fill="none" stroke="#fff">
        <circle cx="12" cy="12" r="7" strokeWidth="3.500" />
        <circle cx="12" cy="12" r="10" strokeWidth="3.500" strokeDasharray="3.400 4.454" />
      </svg>
    ),
  },
  {
    name: "照片",
    icon: (
      <svg width="28" height="28" viewBox="0 0 28 28">
        <path d="M0 0h28v28H0z" fill="#2aa5e8" />
        <path d="M12 20l7-7 9 9v6H12z" fill="#4e6ccc" />
        <path d="M0 17l8-7q1-.5 2 0l18 18H0z" fill="#17478c" />
        <circle cx="18.500" cy="6.500" r="2.600" fill="#fff" />
      </svg>
    ),
  },
  {
    name: "Chrome",
    icon: (
      <svg width="28" height="28" viewBox="0 0 28 28">
        <circle cx="14" cy="14" r="13.500" fill="#fbc93f" />
        <path d="M2.300 7.200A13.500 13.500 0 0 1 26.300 8.500H14L8 17z" fill="#dc4d3f" />
        <path d="M2.300 7.200l6 10.300 8.500 2L13 27.500A13.500 13.500 0 0 1 2.300 7.200z" fill="#1da261" />
        <circle cx="14" cy="14" r="6.500" fill="#fff" />
        <circle cx="14" cy="14" r="5" fill="#4c8bf5" />
      </svg>
    ),
  },
  {
    name: "鲁大师",
    icon: (
      <svg width="28" height="28" viewBox="0 0 28 28">
        <circle cx="14" cy="14" r="14" fill="#417fff" />
        <path d="M12 6v12h9" fill="none" stroke="#fff" strokeWidth="4.500" />
      </svg>
    ),
  },
  {
    name: "Internet Explorer",
    icon: (
      <svg width="30" height="28" viewBox="0 0 30 28" fill="none">
        <path d="M24 20a9.500 9.500 0 1 1 1.500-6H8" stroke="#49c7f5" strokeWidth="5" />
        <path d="M3 27Q-2 24 8 13T28 2q2 4-2 8" stroke="#f6c321" strokeWidth="2.200" />
      </svg>
    ),
  },
  {
    name: "Microsoft Store",
    icon: (
      <svg width="29" height="30" viewBox="0 0 29 30">
        <path d="M7 9V2q0-1 1-1h13q1 0 1 1v7" fill="none" stroke="#d4d4d4" strokeWidth="2.500" />
        <path d="M0 8h29v22H0z" fill="#f1f1f1" />
        <path d="M9 14h5v5H9z" fill="#f04e23" />
        <path d="M15 14h5v5h-5z" fill="#7db900" />
        <path d="M9 20h5v5H9z" fill="#00a3ee" />
        <path d="M15 20h5v5h-5z" fill="#fdb800" />
      </svg>
    ),
  },
  {
    name: "浏览器",
    open: true,
    icon: (
      <svg width="28" height="28" viewBox="0 0 28 28" fill="none">
        <circle cx="14" cy="14" r="14" fill="#39cdf5" />
        <path d="M8.500 11.500q2-3.500 6-3.500 5 0 5 3 0 2.500-4 2.500h-3q-4 0-4 3 0 3 5 3 4 0 6-3.500" stroke="#fff" strokeWidth="2.800" strokeLinecap="round" />
      </svg>
    ),
  },
  {
    name: "QQ浏览器",
    open: true,
    icon: (
      <svg width="30" height="29" viewBox="0 0 30 29">
        <defs>
          <linearGradient id="qq-ring" x1="1" y1="0" x2="0" y2="1">
            <stop offset=".4" stopColor="#1a8cf8" />
            <stop offset="1" stopColor="#d5f0ff" />
          </linearGradient>
        </defs>
        <circle cx="15" cy="14" r="11" fill="none" stroke="url(#qq-ring)" strokeWidth="6.500" />
        <path d="M13 28a4.500 4.500 0 0 1 2-8 6.500 6.500 0 0 1 12 1q3 1 3 4t-3 4z" fill="#fff" />
      </svg>
    ),
  },
  {
    name: "Excel",
    open: true,
    active: true,
    icon: (
      <svg width="30" height="28" viewBox="0 0 30 28">
        <path d="M7 0h22v28H7z" fill="#185c37" />
        <path d="M7 0h11v14H7z" fill="#21a366" />
        <path d="M18 0h11v7H18z" fill="#33c481" />
        <path d="M18 7h11v7H18z" fill="#21a366" />
        <path d="M7 14h22v7H7z" fill="#107c41" />
        <path d="M0 6h15v15H0z" fill="#107c41" />
        <text x="3" y="18" fontSize="13" fontWeight="700" fill="#fff">X</text>
      </svg>
    ),
  },
];

function Taskbar() {
  return (
    <footer className="flex h-[50px] shrink-0 items-stretch bg-linear-to-r from-[#292923] via-[#262d2a] to-[#232b26] text-white">
      <button aria-label="开始" className="flex w-[60px] items-center justify-center"><Windows /></button>
      <button aria-label="任务视图" className="mr-[3px] flex w-[60px] items-center justify-center"><TaskView /></button>
      {apps.map((app) => (
        <button
          key={app.name}
          aria-label={app.name}
          className={app.active ? "flex w-[62px] flex-col items-center bg-[#545b56]" : "flex w-[62px] flex-col items-center"}
        >
          <span className="flex h-[47px] items-center pt-[3px]">{app.icon}</span>
          {app.open && (
            <span className={app.active ? "h-[3px] w-full bg-[#76b9ed]" : "h-[3px] w-[51px] bg-[#76b9ed]"} />
          )}
        </button>
      ))}
      <div className="ml-auto flex items-center">
        <button aria-label="搜狗输入法" className="flex w-[48px] pb-1"><SogouLogo size={20} /></button>
        <button aria-label="显示隐藏的图标" className="flex w-[31px]">
          <svg width="16" height="9" viewBox="0 0 16 9" fill="none" stroke="#fff" strokeWidth="1.500">
            <path d="M0 8.500l8-8 8 8" />
          </svg>
        </button>
        <button aria-label="网络" className="flex w-[29px]">
          <svg width="16" height="17" viewBox="0 0 16 17" fill="none" stroke="#d0d0d0" strokeWidth="1.200">
            <path d="M1 16Q1 3 15 1M4 16Q5 6 15 5M8 16q1-6 7-7" />
            <circle cx="13.500" cy="14.500" r="1.800" fill="#fff" stroke="none" />
          </svg>
        </button>
        <button aria-label="QQ" className="flex w-[33px]">
          <svg width="16" height="20" viewBox="0 0 16 20">
            <path d="M8 0q5 0 5 6 3 5 3 9l-2-1-2 5H4l-2-5-2 1q0-4 3-9 0-6 5-6z" fill="#111" />
            <ellipse cx="8" cy="14" rx="4.500" ry="5" fill="#fff" />
            <path d="M2 9q6 3 12 0v3q-4 1-7 1v3H4v-4z" fill="#e6222c" />
            <ellipse cx="6.300" cy="4" rx="1.200" ry="1.600" fill="#fff" />
            <ellipse cx="9.700" cy="4" rx="1.200" ry="1.600" fill="#fff" />
            <path d="M5 7q3-1.500 6 0-3 1.500-6 0zM2 18h5v2H2zM9 18h5v2H9z" fill="#f6a81c" />
          </svg>
        </button>
        <button aria-label="手写笔" className="flex w-[39px]">
          <svg width="20" height="20" viewBox="0 0 20 20" fill="none" stroke="#fff" strokeWidth="1.300">
            <path d="M7 14L14 2q2-2 3 0 0 2-8 14l-3 2zM6 11q-5 0-5 4 0 5 5 4 3-1 5-5t5-5q4 0 3 3l-4 2" />
          </svg>
        </button>
        <div className="w-[74px] text-center text-[16px] leading-[23px]">
          <div>15:57</div>
          <div>2021/4/8</div>
        </div>
        <button aria-label="通知" className="flex w-[70px] justify-center">
          <svg width="20" height="20" viewBox="0 0 20 20">
            <path d="M0 0h20v17h-7l-3 3-3-3H0z" fill="#fff" />
            <path d="M4 5h12M4 8.500h12M4 12h8" stroke="#232b26" strokeWidth="1.300" />
          </svg>
        </button>
        <span className="mr-[5px] h-[50px] w-px bg-[#6b706d]" />
      </div>
    </footer>
  );
}

const Watermark = () => (
  <svg
    className="pointer-events-none absolute right-[90px] bottom-[30px] drop-shadow-[0_0_1px_#9a9a9a]"
    width="360"
    height="190"
    viewBox="0 0 360 190"
    fill="#ffffff"
    fillOpacity=".82"
    stroke="#c8c8c8"
    strokeOpacity=".6"
    fontFamily="'Open Sans', 'Noto Sans CJK SC', sans-serif"
  >
    <g fontWeight="700">
      <text x="4" y="124" fontSize="78" fontFamily="'Liberation Sans', sans-serif">Bai</text>
      <ellipse cx="135" cy="57" rx="13" ry="17" />
      <ellipse cx="159" cy="33" rx="13" ry="17" />
      <ellipse cx="190" cy="35" rx="14" ry="17" transform="rotate(10 190 35)" />
      <ellipse cx="209" cy="65" rx="14" ry="17" />
      <path d="M170 60q12 0 20 13t18 20q12 15 3 27-9 9-41 4-32 5-39-4-9-12 3-27 11-8 18-20t18-13z" />
      <text x="142" y="114" fontSize="50" fontFamily="'Liberation Sans', sans-serif" stroke="#bdbdbd" strokeOpacity="1">du</text>
      <text x="226" y="119" fontSize="58">经验</text>
    </g>
    <text x="8" y="167" fontSize="38" fillOpacity=".95" strokeOpacity=".3">jingyan.baidu.com</text>
  </svg>
);

export default function App() {
  return (
    <div className="relative flex h-screen flex-col overflow-hidden font-['Noto_Sans','Noto_Sans_CJK_SC',sans-serif] text-[15px]">
      <Header />
      <Ribbon />
      <FormulaBar />
      <Sheet />
      <SheetTabs />
      <StatusBar />
      <Taskbar />
      <Watermark />
      <div className="absolute top-[647px] right-0 flex h-[64px] w-[11px] items-end justify-center rounded-md border-2 border-[#777777] bg-white pb-[2px]">
        <span className="h-[36px] w-1 rounded bg-[#ff7a1f]" />
      </div>
    </div>
  );
}
